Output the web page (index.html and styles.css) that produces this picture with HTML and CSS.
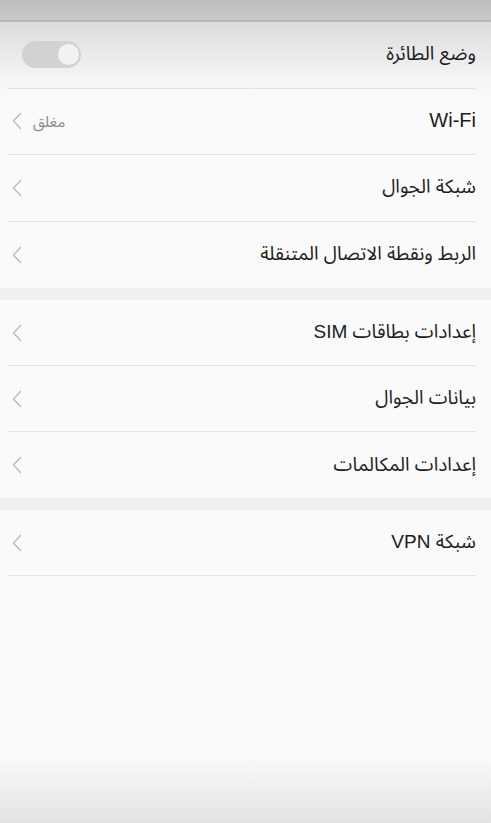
FILE: index.html
```html
<!DOCTYPE html>
<html lang="ar" dir="rtl">
<head>
    <meta charset="UTF-8">
    <meta name="viewport" content="width=device-width, initial-scale=1.0">
    <title>الاتصالات</title>
    <link rel="stylesheet" href="styles.css">
</head>
<body>
    <div class="screen">
        <header class="top-bar">
            <div class="top-bar-inner">
                <span class="back">&#8594;</span>
                <h1>الاتصالات اللاسلكية</h1>
                <span class="action">&#8942;</span>
            </div>
        </header>

        <main class="settings">
            <ul class="group group-first">
                <li class="row">
                    <span class="label">وضع الطائرة</span>
                    <span class="switch"><span class="knob"></span></span>
                </li>
                <li class="row">
                    <span class="label latin">Wi-Fi</span>
                    <span class="trail">
                        <span class="value">مغلق</span>
                        <svg class="chevron" viewBox="0 0 10 18"><path d="M9 1 L1.5 9 L9 17"/></svg>
                    </span>
                </li>
                <li class="row">
                    <span class="label">شبكة الجوال</span>
                    <span class="trail">
                        <svg class="chevron" viewBox="0 0 10 18"><path d="M9 1 L1.5 9 L9 17"/></svg>
                    </span>
                </li>
                <li class="row row-last">
                    <span class="label">الربط ونقطة الاتصال المتنقلة</span>
                    <span class="trail">
                        <svg class="chevron" viewBox="0 0 10 18"><path d="M9 1 L1.5 9 L9 17"/></svg>
                    </span>
                </li>
            </ul>

            <ul class="group">
                <li class="row">
                    <span class="label">إعدادات بطاقات SIM</span>
                    <span class="trail">
                        <svg class="chevron" viewBox="0 0 10 18"><path d="M9 1 L1.5 9 L9 17"/></svg>
                    </span>
                </li>
                <li class="row">
                    <span class="label">بيانات الجوال</span>
                    <span class="trail">
                        <svg class="chevron" viewBox="0 0 10 18"><path d="M9 1 L1.5 9 L9 17"/></svg>
                    </span>
                </li>
                <li class="row row-last">
                    <span class="label">إعدادات المكالمات</span>
                    <span class="trail">
                        <svg class="chevron" viewBox="0 0 10 18"><path d="M9 1 L1.5 9 L9 17"/></svg>
                    </span>
                </li>
            </ul>

            <ul class="group">
                <li class="row">
                    <span class="label">شبكة VPN</span>
                    <span class="trail">
                        <svg class="chevron" viewBox="0 0 10 18"><path d="M9 1 L1.5 9 L9 17"/></svg>
                    </span>
                </li>
            </ul>
        </main>
    </div>
</body>
</html>
```

FILE: styles.css
```css
/* page */
body {
    margin: 0;
    padding: 0;
    font-family: "Liberation Sans", "Noto Sans Arabic UI", "Noto Sans Arabic", "Noto Naskh Arabic", "DejaVu Sans", sans-serif;
    color: #1c1c1c;
    background: #fafafa;
}

.screen {
    display: flex;
    flex-direction: column;
    height: 100vh;
    overflow: hidden;
    background: linear-gradient(to bottom, #fafafa calc(100% - 68px), #e3e3e3 100%);
}

/* header, mostly scrolled out of view */
.top-bar {
    height: 20px;
    overflow: hidden;
    background: linear-gradient(to bottom, #bebebe, #c9c9c9);
    border-bottom: 2px solid #b9b9b9;
}

.top-bar-inner {
    display: flex;
    align-items: center;
    justify-content: space-between;
    height: 40px;
    margin-top: -36px;
    padding: 0 30px;
}

.top-bar h1 {
    margin: 0 0 0 auto;
    padding-right: 100px;
    font-size: 20px;
    font-weight: normal;
}

.back,
.action {
    color: #2f6fc4;
    font-size: 20px;
}

/* list */
.settings {
    flex: 1;
}

.group {
    list-style: none;
    margin: 0;
    padding: 0;
    background: #fafafa;
}

.group-first {
    background: linear-gradient(to bottom, #dcdcdc 0, #f6f6f6 60px, #fafafa 80px);
}

.group + .group {
    border-top: 12px solid #f0f0f0;
}

.row {
    display: flex;
    align-items: center;
    box-sizing: border-box;
    height: 66px;
    margin: 0 15px 0 8px;
    border-bottom: 1px solid #e4e4e4;
}

.group-first .row {
    height: 66.5px;
}

.row-last {
    border-bottom: none;
}

.label {
    font-size: 19px;
    line-height: 1;
    padding-bottom: 2px;
}

.label.latin {
    font-size: 20px;
}

.trail {
    display: flex;
    align-items: center;
    gap: 11px;
    margin-right: auto;
    padding-left: 4px;
}

.value {
    font-size: 15px;
    color: #8a8a8a;
}

.chevron {
    width: 10px;
    height: 18px;
    fill: none;
    stroke: #bcbcbc;
    stroke-width: 1.4;
}

/* toggle */
.switch {
    display: flex;
    align-items: center;
    justify-content: flex-start;
    width: 59px;
    height: 27px;
    margin-right: auto;
    margin-left: 14px;
    padding: 0 2px;
    box-sizing: border-box;
    border-radius: 14px;
    background: #d2d2d2;
}

.knob {
    width: 21px;
    height: 21px;
    border-radius: 50%;
    background: #f2f2f2;
}
```
